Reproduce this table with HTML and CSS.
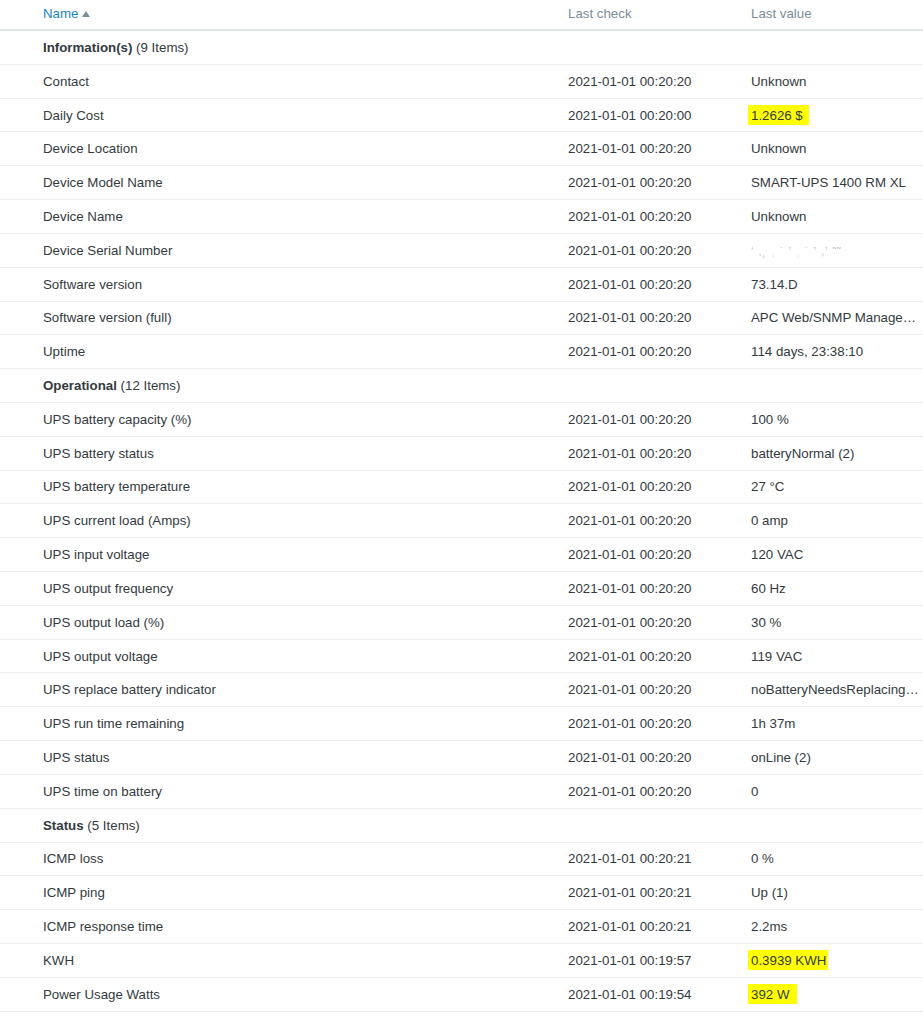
FILE: index.html
```html
<!DOCTYPE html>
<html lang="en">
<head>
  <meta charset="UTF-8">
  <title>Latest data</title>
  <link rel="stylesheet" href="styles.css">
</head>
<body>
  <div class="list">
    <div class="row head">
      <div class="col name"><span class="sort">Name</span><span class="arrow"></span></div>
      <div class="col check">Last check</div>
      <div class="col value">Last value</div>
    </div>

    <div class="row group"><div class="col name"><b>Information(s)</b> (9 Items)</div></div>
    <div class="row"><div class="col name">Contact</div><div class="col check">2021-01-01 00:20:20</div><div class="col value">Unknown</div></div>
    <div class="row"><div class="col name">Daily Cost</div><div class="col check">2021-01-01 00:20:00</div><div class="col value"><span class="mark mark-cost">1.2626 $</span></div></div>
    <div class="row"><div class="col name">Device Location</div><div class="col check">2021-01-01 00:20:20</div><div class="col value">Unknown</div></div>
    <div class="row"><div class="col name">Device Model Name</div><div class="col check">2021-01-01 00:20:20</div><div class="col value">SMART-UPS 1400 RM XL</div></div>
    <div class="row"><div class="col name">Device Name</div><div class="col check">2021-01-01 00:20:20</div><div class="col value">Unknown</div></div>
    <div class="row"><div class="col name">Device Serial Number</div><div class="col check">2021-01-01 00:20:20</div><div class="col value"><span class="blur">ʻ ,˛ ˌ ˙ ʼ ˌ ˙ ʼ ,ʼ ˜˜</span></div></div>
    <div class="row"><div class="col name">Software version</div><div class="col check">2021-01-01 00:20:20</div><div class="col value">73.14.D</div></div>
    <div class="row"><div class="col name">Software version (full)</div><div class="col check">2021-01-01 00:20:20</div><div class="col value">APC Web/SNMP Manage…</div></div>
    <div class="row"><div class="col name">Uptime</div><div class="col check">2021-01-01 00:20:20</div><div class="col value">114 days, 23:38:10</div></div>

    <div class="row group"><div class="col name"><b>Operational</b> (12 Items)</div></div>
    <div class="row"><div class="col name">UPS battery capacity (%)</div><div class="col check">2021-01-01 00:20:20</div><div class="col value">100 %</div></div>
    <div class="row"><div class="col name">UPS battery status</div><div class="col check">2021-01-01 00:20:20</div><div class="col value">batteryNormal (2)</div></div>
    <div class="row"><div class="col name">UPS battery temperature</div><div class="col check">2021-01-01 00:20:20</div><div class="col value">27 °C</div></div>
    <div class="row"><div class="col name">UPS current load (Amps)</div><div class="col check">2021-01-01 00:20:20</div><div class="col value">0 amp</div></div>
    <div class="row"><div class="col name">UPS input voltage</div><div class="col check">2021-01-01 00:20:20</div><div class="col value">120 VAC</div></div>
    <div class="row"><div class="col name">UPS output frequency</div><div class="col check">2021-01-01 00:20:20</div><div class="col value">60 Hz</div></div>
    <div class="row"><div class="col name">UPS output load (%)</div><div class="col check">2021-01-01 00:20:20</div><div class="col value">30 %</div></div>
    <div class="row"><div class="col name">UPS output voltage</div><div class="col check">2021-01-01 00:20:20</div><div class="col value">119 VAC</div></div>
    <div class="row"><div class="col name">UPS replace battery indicator</div><div class="col check">2021-01-01 00:20:20</div><div class="col value">noBatteryNeedsReplacing…</div></div>
    <div class="row"><div class="col name">UPS run time remaining</div><div class="col check">2021-01-01 00:20:20</div><div class="col value">1h 37m</div></div>
    <div class="row"><div class="col name">UPS status</div><div class="col check">2021-01-01 00:20:20</div><div class="col value">onLine (2)</div></div>
    <div class="row"><div class="col name">UPS time on battery</div><div class="col check">2021-01-01 00:20:20</div><div class="col value">0</div></div>

    <div class="row group"><div class="col name"><b>Status</b> (5 Items)</div></div>
    <div class="row"><div class="col name">ICMP loss</div><div class="col check">2021-01-01 00:20:21</div><div class="col value">0 %</div></div>
    <div class="row"><div class="col name">ICMP ping</div><div class="col check">2021-01-01 00:20:21</div><div class="col value">Up (1)</div></div>
    <div class="row"><div class="col name">ICMP response time</div><div class="col check">2021-01-01 00:20:21</div><div class="col value">2.2ms</div></div>
    <div class="row"><div class="col name">KWH</div><div class="col check">2021-01-01 00:19:57</div><div class="col value"><span class="mark mark-kwh">0.3939 KWH</span></div></div>
    <div class="row"><div class="col name">Power Usage Watts</div><div class="col check">2021-01-01 00:19:54</div><div class="col value"><span class="mark mark-w">392 W</span></div></div>
  </div>
</body>
</html>
```

FILE: styles.css
```css
:root {
  --text: #333a3e;
  --muted: #7b8d98;
  --link: #1a84c7;
  --row-border: #ebeef0;
  --head-border: #dfe4e7;
  --marker: #ffff00;
}

body {
  margin: 0;
  background: #ffffff;
  font-family: "Liberation Sans", Arial, sans-serif;
  font-size: 13.3px;
  color: var(--text);
}

/* Tabla de datos */
.list {
  width: 923px;
}

.row {
  display: flex;
  align-items: center;
  box-sizing: border-box;
  height: 33.82px;
  border-bottom: 1px solid var(--row-border);
}

.row.head {
  height: 31px;
  align-items: flex-start;
  padding-top: 6px;
  border-bottom: 2px solid var(--head-border);
  color: var(--muted);
}

.col {
  white-space: nowrap;
}

.name {
  width: 568px;
  padding-left: 43px;
  box-sizing: border-box;
}

.check {
  width: 183px;
}

.value {
  width: 172px;
}

.sort {
  color: var(--link);
}

.arrow {
  display: inline-block;
  margin-left: 4px;
  width: 0;
  height: 0;
  border-left: 4px solid transparent;
  border-right: 4px solid transparent;
  border-bottom: 6px solid var(--muted);
  vertical-align: 1px;
}

.group b {
  font-weight: bold;
}

/* Marcas de resaltador */
.mark {
  background: var(--marker);
  display: inline-block;
  margin-left: -3px;
  padding: 3px 0 2px 3px;
}

.mark-cost {
  padding-right: 6px;
}

.mark-kwh {
  padding-right: 2px;
}

.mark-w {
  padding-right: 8px;
}

.blur {
  color: #b9bec2;
  font-size: 11px;
  letter-spacing: 1px;
  filter: blur(0.4px);
}
```
